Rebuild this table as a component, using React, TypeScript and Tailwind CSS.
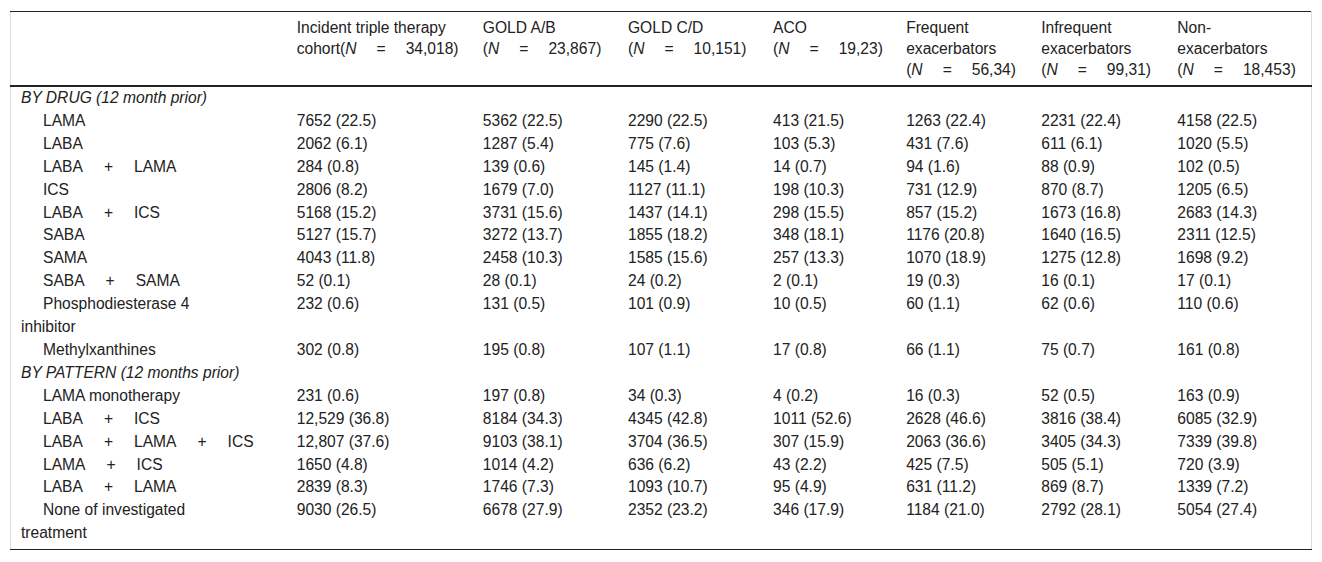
import React from 'react'

const Plus = () => <span className="mx-[21px]">+</span>

const N = ({ v }: { v: string }) => (
  <>
    (<i>N</i><span className="mx-[20px]">=</span>{v})
  </>
)

type Row = { label: React.ReactNode; vals: string[] }

const drugRows: Row[] = [
  { label: 'LAMA', vals: ['7652 (22.5)', '5362 (22.5)', '2290 (22.5)', '413 (21.5)', '1263 (22.4)', '2231 (22.4)', '4158 (22.5)'] },
  { label: 'LABA', vals: ['2062 (6.1)', '1287 (5.4)', '775 (7.6)', '103 (5.3)', '431 (7.6)', '611 (6.1)', '1020 (5.5)'] },
  { label: <>LABA<Plus />LAMA</>, vals: ['284 (0.8)', '139 (0.6)', '145 (1.4)', '14 (0.7)', '94 (1.6)', '88 (0.9)', '102 (0.5)'] },
  { label: 'ICS', vals: ['2806 (8.2)', '1679 (7.0)', '1127 (11.1)', '198 (10.3)', '731 (12.9)', '870 (8.7)', '1205 (6.5)'] },
  { label: <>LABA<Plus />ICS</>, vals: ['5168 (15.2)', '3731 (15.6)', '1437 (14.1)', '298 (15.5)', '857 (15.2)', '1673 (16.8)', '2683 (14.3)'] },
  { label: 'SABA', vals: ['5127 (15.7)', '3272 (13.7)', '1855 (18.2)', '348 (18.1)', '1176 (20.8)', '1640 (16.5)', '2311 (12.5)'] },
  { label: 'SAMA', vals: ['4043 (11.8)', '2458 (10.3)', '1585 (15.6)', '257 (13.3)', '1070 (18.9)', '1275 (12.8)', '1698 (9.2)'] },
  { label: <>SABA<Plus />SAMA</>, vals: ['52 (0.1)', '28 (0.1)', '24 (0.2)', '2 (0.1)', '19 (0.3)', '16 (0.1)', '17 (0.1)'] },
  { label: <>Phosphodiesterase 4<br />inhibitor</>, vals: ['232 (0.6)', '131 (0.5)', '101 (0.9)', '10 (0.5)', '60 (1.1)', '62 (0.6)', '110 (0.6)'] },
  { label: 'Methylxanthines', vals: ['302 (0.8)', '195 (0.8)', '107 (1.1)', '17 (0.8)', '66 (1.1)', '75 (0.7)', '161 (0.8)'] },
]

const patternRows: Row[] = [
  { label: 'LAMA monotherapy', vals: ['231 (0.6)', '197 (0.8)', '34 (0.3)', '4 (0.2)', '16 (0.3)', '52 (0.5)', '163 (0.9)'] },
  { label: <>LABA<Plus />ICS</>, vals: ['12,529 (36.8)', '8184 (34.3)', '4345 (42.8)', '1011 (52.6)', '2628 (46.6)', '3816 (38.4)', '6085 (32.9)'] },
  { label: <>LABA<Plus />LAMA<Plus />ICS</>, vals: ['12,807 (37.6)', '9103 (38.1)', '3704 (36.5)', '307 (15.9)', '2063 (36.6)', '3405 (34.3)', '7339 (39.8)'] },
  { label: <>LAMA<Plus />ICS</>, vals: ['1650 (4.8)', '1014 (4.2)', '636 (6.2)', '43 (2.2)', '425 (7.5)', '505 (5.1)', '720 (3.9)'] },
  { label: <>LABA<Plus />LAMA</>, vals: ['2839 (8.3)', '1746 (7.3)', '1093 (10.7)', '95 (4.9)', '631 (11.2)', '869 (8.7)', '1339 (7.2)'] },
  { label: <>None of investigated<br />treatment</>, vals: ['9030 (26.5)', '6678 (27.9)', '2352 (23.2)', '346 (17.9)', '1184 (21.0)', '2792 (28.1)', '5054 (27.4)'] },
]

const headers: React.ReactNode[] = [
  <>Incident triple therapy<br />cohort<N v="34,018" /></>,
  <>GOLD A/B<br /><N v="23,867" /></>,
  <>GOLD C/D<br /><N v="10,151" /></>,
  <>ACO<br /><N v="19,23" /></>,
  <>Frequent<br />exacerbators<br /><N v="56,34" /></>,
  <>Infrequent<br />exacerbators<br /><N v="99,31" /></>,
  <>Non-<br />exacerbators<br /><N v="18,453" /></>,
]

const widths = ['w-[276px]', 'w-[186px]', 'w-[145px]', 'w-[145px]', 'w-[133px]', 'w-[135px]', 'w-[136px]', 'w-[144px]']

const Group = ({ title, rows, last }: { title: string; rows: Row[]; last?: boolean }) => (
  <>
    <tr>
      <td colSpan={8} className="px-[10px] italic">{title}</td>
    </tr>
    {rows.map((r, i) => {
      const pad = last && i === rows.length - 1 ? 'pb-[4px]' : ''
      return (
        <tr key={i} className="align-top">
          <td className={`pl-[10px] pr-[10px] indent-[22px] whitespace-nowrap ${pad}`}>{r.label}</td>
          {r.vals.map((v, j) => (
            <td key={j} className={`px-[10px] whitespace-nowrap ${pad}`}>{v}</td>
          ))}
        </tr>
      )
    })}
  </>
)

export default function App() {
  return (
    <div className="bg-white w-[1322px] h-[562px] pt-[11px] pl-[10px] font-['Liberation_Sans',Arial,sans-serif] text-[15.6px] text-[#222]">
      <table className="table-fixed border-collapse w-[1302px] border-x border-x-[#dcdcdc] border-t border-t-[#222] border-b border-b-[#222]">
        <colgroup>
          {widths.map((w, i) => <col key={i} className={w} />)}
        </colgroup>
        <thead>
          <tr className="border-b-2 border-b-[#222] align-top leading-[21px]">
            <th className="py-[5px]"></th>
            {headers.map((h, i) => (
              <th key={i} className="px-[10px] py-[5px] text-left font-normal whitespace-nowrap">{h}</th>
            ))}
          </tr>
        </thead>
        <tbody className="leading-[22.9px]">
          <Group title="BY DRUG (12 month prior)" rows={drugRows} />
          <Group title="BY PATTERN (12 months prior)" rows={patternRows} last />
        </tbody>
      </table>
    </div>
  )
}
